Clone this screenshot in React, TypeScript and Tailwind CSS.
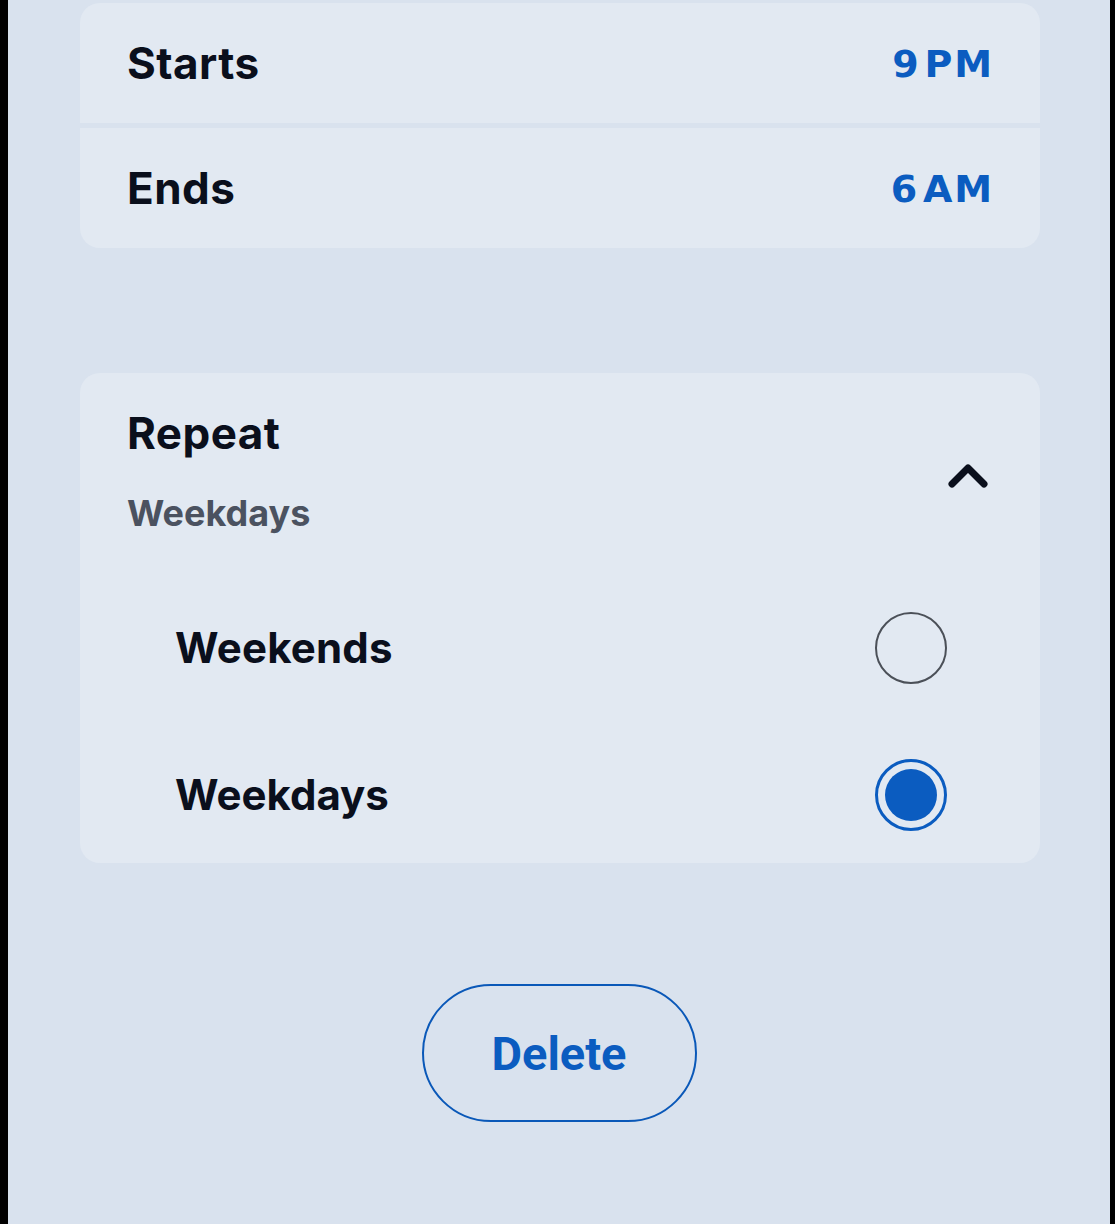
import React from "react";

const font = { fontFamily: "Inter, 'Noto Sans', sans-serif" };

function Radio({ checked }: { checked: boolean }) {
  if (checked) {
    return (
      <div className="w-[72px] h-[72px] rounded-full border-[3px] border-[#0b5cc0] flex items-center justify-center">
        <div className="w-[52px] h-[52px] rounded-full bg-[#0b5cc0]" />
      </div>
    );
  }
  return <div className="w-[72px] h-[72px] rounded-full border-2 border-[#4b5058]" />;
}

function Time({ n, s }: { n: string; s: string }) {
  return (
    <span
      className="flex items-baseline text-[38px] font-bold text-[#0b5cc0] leading-none tracking-[0.05em] mt-[2px]"
      style={{ fontFamily: "'DejaVu Sans', Inter, sans-serif" }}
    >
      <span>{n}</span>
      <span className="ml-[4px] mr-[-2px]">{s}</span>
    </span>
  );
}

export default function App() {
  return (
    <div className="w-[1115px] h-[1224px] flex bg-black overflow-hidden" style={font}>
      <div className="w-[8px] shrink-0 bg-black" />
      <div className="w-[1102px] h-full bg-[#d9e2ee] flex flex-col">
        <div className="ml-[72px] w-[960px] mt-[3px] flex flex-col gap-[5px]">
          <div className="h-[120px] rounded-t-[20px] bg-[#e2e9f2] flex items-center justify-between pl-[47px] pr-[48px]">
            <span className="text-[44px] font-bold text-[#0a0f1c] leading-none tracking-[0.01em]">Starts</span>
            <Time n="9" s="PM" />
          </div>
          <div className="h-[120px] rounded-b-[20px] bg-[#e2e9f2] flex items-center justify-between pl-[47px] pr-[48px]">
            <span className="text-[44px] font-bold text-[#0a0f1c] leading-none tracking-[0.01em]">Ends</span>
            <Time n="6" s="AM" />
          </div>
        </div>

        <div className="ml-[72px] w-[960px] mt-[125px] h-[490px] rounded-[20px] bg-[#e2e9f2] flex flex-col">
          <div className="flex items-center justify-between pl-[47px] pr-[52px] pt-[38px]">
            <div className="flex flex-col gap-[40px]">
              <span className="text-[44px] font-bold text-[#0a0f1c] leading-none tracking-[0.01em]">Repeat</span>
              <span className="text-[36px] font-bold text-[#4b5260] leading-none">Weekdays</span>
            </div>
            <svg width="40" height="26" viewBox="0 0 40 26" className="mt-[10px]">
              <polyline points="4,21 20,5 36,21" fill="none" stroke="#0a0f1c" strokeWidth="7" strokeLinecap="round" strokeLinejoin="round" />
            </svg>
          </div>
          <div className="mt-[48px] flex flex-col gap-[9px]">
            <div className="h-[138px] flex items-center justify-between pl-[95px] pr-[93px]">
              <span className="text-[42px] font-bold text-[#0a0f1c] leading-none tracking-[0.005em]">Weekends</span>
              <Radio checked={false} />
            </div>
            <div className="h-[138px] flex items-center justify-between pl-[95px] pr-[93px]">
              <span className="text-[42px] font-bold text-[#0a0f1c] leading-none">Weekdays</span>
              <Radio checked={true} />
            </div>
          </div>
        </div>

        <div className="mt-[121px] flex justify-center">
          <button
            className="w-[275px] h-[138px] rounded-full border-2 border-[#0a58b8] flex items-center justify-center text-[47px] font-bold text-[#0b5cc0] leading-none"
            style={{ fontFamily: "Roboto, 'Noto Sans', sans-serif" }}
          >
            Delete
          </button>
        </div>
      </div>
      <div className="w-[5px] shrink-0 bg-black" />
    </div>
  );
}
